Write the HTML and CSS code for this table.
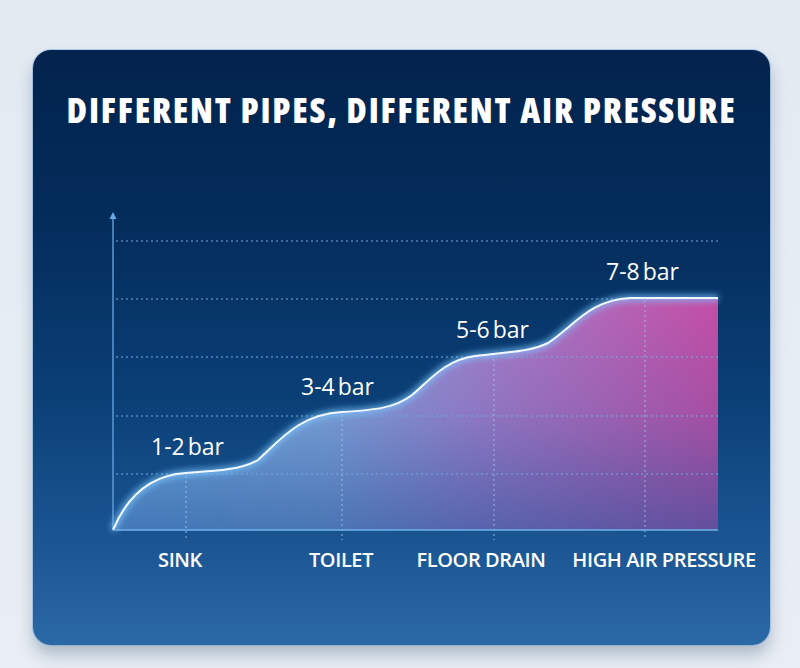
FILE: index.html
```html
<!DOCTYPE html>
<html lang="en">
<head>
<meta charset="utf-8">
<title>Different pipes, different air pressure</title>
<link rel="stylesheet" href="styles.css">
</head>
<body>
<main class="card">
  <h1 class="title">DIFFERENT PIPES, DIFFERENT AIR PRESSURE</h1>
  <svg class="chart" viewBox="33 200 737 380" width="737" height="380" xmlns="http://www.w3.org/2000/svg">
    <defs>
      <linearGradient id="fillH" x1="113" y1="0" x2="718" y2="0" gradientUnits="userSpaceOnUse">
        <stop offset="0" stop-color="#72b1e4"/>
        <stop offset="0.35" stop-color="#86aade"/>
        <stop offset="0.6" stop-color="#a580cc"/>
        <stop offset="1" stop-color="#c44ea6"/>
      </linearGradient>
      <linearGradient id="fillV" x1="0" y1="298" x2="0" y2="530" gradientUnits="userSpaceOnUse">
        <stop offset="0" stop-color="#1e4f96" stop-opacity="0"/>
        <stop offset="0.5" stop-color="#1e4f96" stop-opacity="0.18"/>
        <stop offset="1" stop-color="#1e4f96" stop-opacity="0.58"/>
      </linearGradient>
      <filter id="glow" x="-10%" y="-20%" width="120%" height="140%">
        <feGaussianBlur stdDeviation="3"/>
      </filter>
    </defs>

    <!-- y axis -->
    <line class="axis" x1="113" y1="218" x2="113" y2="530"/>
    <polygon class="arrow" points="113,212 109.5,219 116.5,219"/>

    <!-- area -->
    <path d="M113,530 C128,494 152,475 186,473 C215,471 240,470 258,460 C280,440 300,414 342,412 C375,410 395,408 412,395 C430,380 445,360 475,356 C505,352 530,352 548,343 C575,325 590,300 630,298 L718,298 L718,530 Z" fill="url(#fillH)"/>
    <path d="M113,530 C128,494 152,475 186,473 C215,471 240,470 258,460 C280,440 300,414 342,412 C375,410 395,408 412,395 C430,380 445,360 475,356 C505,352 530,352 548,343 C575,325 590,300 630,298 L718,298 L718,530 Z" fill="url(#fillV)"/>

    <!-- grid -->
    <g class="grid">
      <line x1="116" y1="241" x2="718" y2="241"/>
      <line x1="116" y1="299" x2="718" y2="299"/>
      <line x1="116" y1="357" x2="718" y2="357"/>
      <line x1="116" y1="416" x2="718" y2="416"/>
      <line x1="116" y1="474" x2="718" y2="474"/>
    </g>
    <g class="vgrid">
      <line x1="186" y1="476" x2="186" y2="540"/>
      <line x1="342" y1="414" x2="342" y2="540"/>
      <line x1="494" y1="354" x2="494" y2="540"/>
      <line x1="645" y1="300" x2="645" y2="540"/>
    </g>

    <!-- curve glow + line -->
    <path class="glow" d="M113,530 C128,494 152,475 186,473 C215,471 240,470 258,460 C280,440 300,414 342,412 C375,410 395,408 412,395 C430,380 445,360 475,356 C505,352 530,352 548,343 C575,325 590,300 630,298 L718,298" filter="url(#glow)"/>
    <path class="curve" d="M113,530 C128,494 152,475 186,473 C215,471 240,470 258,460 C280,440 300,414 342,412 C375,410 395,408 412,395 C430,380 445,360 475,356 C505,352 530,352 548,343 C575,325 590,300 630,298 L718,298"/>

    <!-- baseline -->
    <line class="base" x1="113" y1="530" x2="718" y2="530"/>

    <!-- value labels -->
    <text class="val" x="151" y="455">1-2<tspan dx="3">bar</tspan></text>
    <text class="val" x="301" y="395">3-4<tspan dx="3">bar</tspan></text>
    <text class="val" x="456" y="338">5-6<tspan dx="3">bar</tspan></text>
    <text class="val" x="606" y="280">7-8<tspan dx="3">bar</tspan></text>

    <!-- category labels -->
    <text class="cat" x="180" y="567">SINK</text>
    <text class="cat" x="341" y="567">TOILET</text>
    <text class="cat" x="481" y="567">FLOOR DRAIN</text>
    <text class="cat" x="664" y="567">HIGH AIR PRESSURE</text>
  </svg>
</main>
</body>
</html>
```

FILE: styles.css
```css
html, body {
  margin: 0;
  padding: 0;
}

body {
  width: 800px;
  height: 668px;
  overflow: hidden;
  background: linear-gradient(180deg, #e3eaf2 0%, #e6edf4 60%, #e9eef4 100%);
  padding-top: 50px;
  box-sizing: border-box;
  font-family: "Open Sans", "Liberation Sans", sans-serif;
}

.card {
  margin-left: 33px;
  width: 737px;
  height: 595px;
  border-radius: 18px;
  background: linear-gradient(180deg, #02234d 0%, #042d5c 30%, #0a3f76 58%, #1a5592 82%, #2b68a6 100%);
  box-shadow: 0 0 0 1px rgba(90, 150, 220, 0.35), 0 10px 16px rgba(20, 50, 90, 0.28);
  overflow: hidden;
}

.title {
  margin: 0;
  height: 110px;
  padding-top: 40px;
  box-sizing: border-box;
  line-height: 40px;
  font-size: 35px;
  font-weight: 800;
  font-stretch: 75%;
  letter-spacing: 1.75px;
  text-align: center;
  color: #ffffff;
  white-space: nowrap;
}

.chart {
  display: block;
  margin-top: 40px;
}

.axis {
  stroke: #5b9ad6;
  stroke-width: 1.5;
}

.arrow {
  fill: #6aa8e0;
}

.grid line {
  stroke: #6fa6e0;
  stroke-opacity: 0.7;
  stroke-width: 1.5;
  stroke-dasharray: 2 3;
}

.vgrid line {
  stroke: #a8c8ee;
  stroke-opacity: 0.55;
  stroke-width: 1.5;
  stroke-dasharray: 2 3;
}

.glow {
  fill: none;
  stroke: #7cc6ff;
  stroke-width: 6;
  stroke-opacity: 0.8;
}

.curve {
  fill: none;
  stroke: #f2f8ff;
  stroke-width: 2;
}

.base {
  stroke: #6eb2ea;
  stroke-width: 1.5;
}

.val {
  font-family: "Open Sans", "Liberation Sans", sans-serif;
  font-size: 23px;
  fill: #ffffff;
}

.cat {
  font-family: "Open Sans", "Liberation Sans", sans-serif;
  font-size: 20px;
  font-weight: 600;
  letter-spacing: -0.4px;
  fill: #ffffff;
  text-anchor: middle;
}
```
